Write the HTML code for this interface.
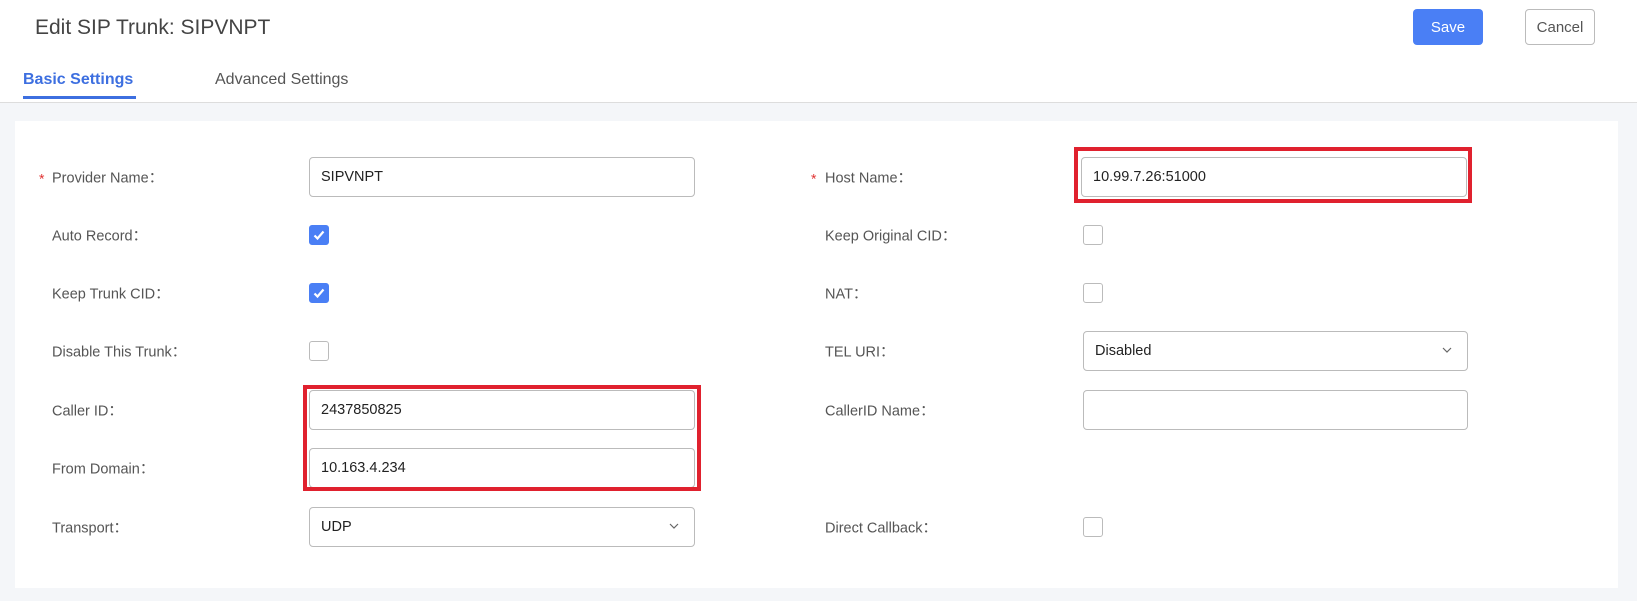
<!DOCTYPE html>
<html><head><meta charset="utf-8"><style>
*{box-sizing:border-box;margin:0;padding:0}
body{width:1637px;height:601px;background:#fff;font-family:"Liberation Sans",sans-serif;position:relative;overflow:hidden;color:#333}
.abs{position:absolute}
.title{left:35px;top:16px;font-size:21px;color:#444}
.btn{top:9px;height:36px;width:70px;border-radius:4px;font-size:15px;display:flex;align-items:center;justify-content:center}
.save{left:1413px;background:#4a7ff5;color:#fff}
.cancel{left:1525px;border:1px solid #bbb;color:#555;background:#fff}
.tab{top:71px;font-size:16px}
.bg{left:0;top:102px;width:1637px;height:499px;background:#f4f6f9;border-top:1px solid #ddd}
.panel{left:15px;top:121px;width:1603px;height:467px;background:#fff}
.lbl{font-size:14.5px;color:#555;transform:translateY(-50%)}
.star{color:#e0302f;font-size:14px;transform:translateY(-40%)}
.inp{height:40px;border:1px solid #bbb;border-radius:4px;background:#fff;font-size:14.5px;color:#222;padding-left:11px;display:flex;align-items:center;transform:translateY(-50%)}
.cb{width:20px;height:20px;border:1px solid #bbb;border-radius:3px;background:#fff;transform:translateY(-50%)}
.cb.on{background:#4a7ff5;border-color:#4a7ff5}
.red{border:4px solid #e0212e}
.chev{position:absolute;right:14px;top:12px}
</style></head><body>
<div class="abs title">Edit SIP Trunk: SIPVNPT</div>
<div class="abs btn save">Save</div>
<div class="abs btn cancel">Cancel</div>
<div class="abs tab" style="left:23px;color:#3d6fe0;font-weight:bold">Basic Settings</div>
<div class="abs" style="left:23px;top:96px;width:113px;height:3px;background:#3d6fe0"></div>
<div class="abs tab" style="left:215px;color:#555">Advanced Settings</div>
<div class="abs bg"></div>
<div class="abs panel"></div>

<!-- left column -->
<div class="abs star" style="left:39px;top:177px">*</div>
<div class="abs lbl" style="left:52px;top:177px">Provider Name：</div>
<div class="abs inp" style="left:309px;top:177px;width:386px">SIPVNPT</div>

<div class="abs lbl" style="left:52px;top:235px">Auto Record：</div>
<div class="abs cb on" style="left:309px;top:235px"><svg width="18" height="18" viewBox="0 0 18 18"><path d="M4.5 9.5l3 3 6-7" stroke="#fff" stroke-width="2.2" fill="none"/></svg></div>

<div class="abs lbl" style="left:52px;top:293px">Keep Trunk CID：</div>
<div class="abs cb on" style="left:309px;top:293px"><svg width="18" height="18" viewBox="0 0 18 18"><path d="M4.5 9.5l3 3 6-7" stroke="#fff" stroke-width="2.2" fill="none"/></svg></div>

<div class="abs lbl" style="left:52px;top:351px">Disable This Trunk：</div>
<div class="abs cb" style="left:309px;top:351px"></div>

<div class="abs lbl" style="left:52px;top:410px">Caller ID：</div>
<div class="abs inp" style="left:309px;top:410px;width:386px">2437850825</div>
<div class="abs lbl" style="left:52px;top:468px">From Domain：</div>
<div class="abs inp" style="left:309px;top:468px;width:386px">10.163.4.234</div>
<div class="abs red" style="left:303px;top:385px;width:398px;height:106px"></div>

<div class="abs lbl" style="left:52px;top:527px">Transport：</div>
<div class="abs inp" style="left:309px;top:527px;width:386px">UDP<svg class="chev" width="12" height="12" viewBox="0 0 12 12"><path d="M2 4l4 4 4-4" stroke="#666" stroke-width="1.2" fill="none"/></svg></div>

<!-- right column -->
<div class="abs star" style="left:811px;top:177px">*</div>
<div class="abs lbl" style="left:825px;top:177px">Host Name：</div>
<div class="abs inp" style="left:1081px;top:177px;width:386px">10.99.7.26:51000</div>
<div class="abs red" style="left:1074px;top:147px;width:398px;height:56px"></div>

<div class="abs lbl" style="left:825px;top:235px">Keep Original CID：</div>
<div class="abs cb" style="left:1083px;top:235px"></div>
<div class="abs lbl" style="left:825px;top:293px">NAT：</div>
<div class="abs cb" style="left:1083px;top:293px"></div>
<div class="abs lbl" style="left:825px;top:351px">TEL URI：</div>
<div class="abs inp" style="left:1083px;top:351px;width:385px">Disabled<svg class="chev" width="12" height="12" viewBox="0 0 12 12"><path d="M2 4l4 4 4-4" stroke="#666" stroke-width="1.2" fill="none"/></svg></div>
<div class="abs lbl" style="left:825px;top:410px">CallerID Name：</div>
<div class="abs inp" style="left:1083px;top:410px;width:385px"></div>
<div class="abs lbl" style="left:825px;top:527px">Direct Callback：</div>
<div class="abs cb" style="left:1083px;top:527px"></div>
</body></html>
